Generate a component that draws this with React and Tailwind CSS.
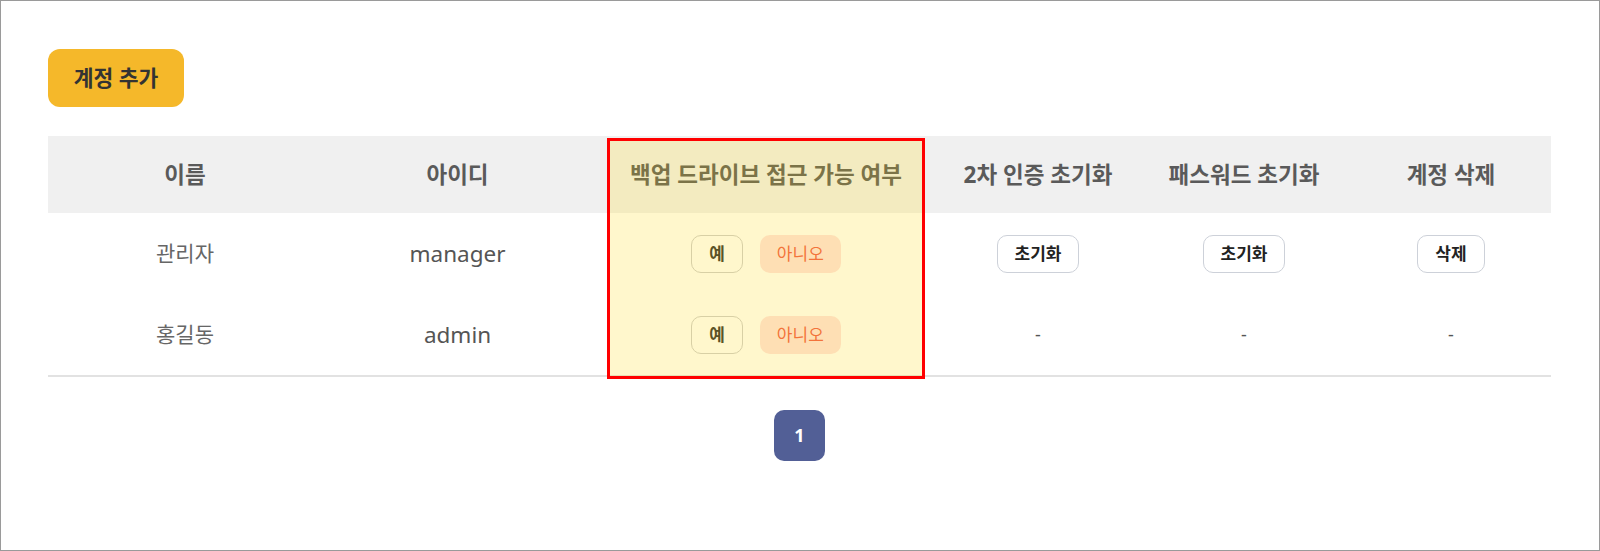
export default function App() {
  const grid = "grid grid-cols-[274px_271px_346px_198px_214px_200px]";
  const outlineBtn =
    "h-[38px] rounded-[10px] border border-[#cdd1d9] bg-white px-[17px] text-[17px] font-semibold text-[#222] leading-none";
  const rows = [
    { name: "관리자", id: "manager", admin: true },
    { name: "홍길동", id: "admin", admin: false },
  ];
  return (
    <div className="w-[1600px] h-[551px] border border-[#9a9a9a] bg-white pt-[48px] pl-[47px] pr-[48px] font-['Noto_Sans','Noto_Sans_CJK_KR',sans-serif]">
      <button className="h-[58px] w-[136px] rounded-[12px] bg-[#f5b82a] text-[21.5px] font-bold text-[#333] leading-none">
        계정 추가
      </button>
      <div className="relative mt-[29px] w-[1503px]">
        <div className={`${grid} h-[77px] items-center bg-[#f0f0f0] text-center text-[22.5px] font-bold text-[#5a5a5a]`}>
          <div>이름</div>
          <div>아이디</div>
          <div>백업 드라이브 접근 가능 여부</div>
          <div>2차 인증 초기화</div>
          <div>패스워드 초기화</div>
          <div>계정 삭제</div>
        </div>
        <div className="border-b-2 border-[#e2e2e2]">
          {rows.map((r) => (
            <div key={r.id} className={`${grid} h-[81px] items-center text-center text-[21px] text-[#666]`}>
              <div>{r.name}</div>
              <div className="text-[22.5px] text-[#555]">{r.id}</div>
              <div className="flex items-center justify-center gap-[17px]">
                <button className="h-[38px] rounded-[10px] border border-[#cfcfcf] bg-white px-[17px] text-[17px] font-bold text-[#333] leading-none">
                  예
                </button>
                <button className="h-[38px] rounded-[10px] border border-transparent bg-[#fee2e2] px-4 text-[17px] text-[#f05a4a] leading-none">
                  아니오
                </button>
              </div>
              {r.admin ? (
                <>
                  <div className="flex justify-center">
                    <button className={outlineBtn}>초기화</button>
                  </div>
                  <div className="flex justify-center">
                    <button className={outlineBtn}>초기화</button>
                  </div>
                  <div className="flex justify-center">
                    <button className={outlineBtn}>삭제</button>
                  </div>
                </>
              ) : (
                <>
                  <div className="text-[18px] text-[#555]">-</div>
                  <div className="text-[18px] text-[#555]">-</div>
                  <div className="text-[18px] text-[#555]">-</div>
                </>
              )}
            </div>
          ))}
        </div>
        <div className="pointer-events-none absolute left-[559px] top-[2px] h-[241px] w-[318px] border-[3px] border-[#ff0000] bg-[rgba(255,215,0,0.2)]" />
      </div>
      <div className="mt-[33px] flex justify-center">
        <div className="flex h-[51px] w-[51px] items-center justify-center rounded-[10px] bg-[#525f96] text-[18px] font-bold text-white">
          1
        </div>
      </div>
    </div>
  );
}
